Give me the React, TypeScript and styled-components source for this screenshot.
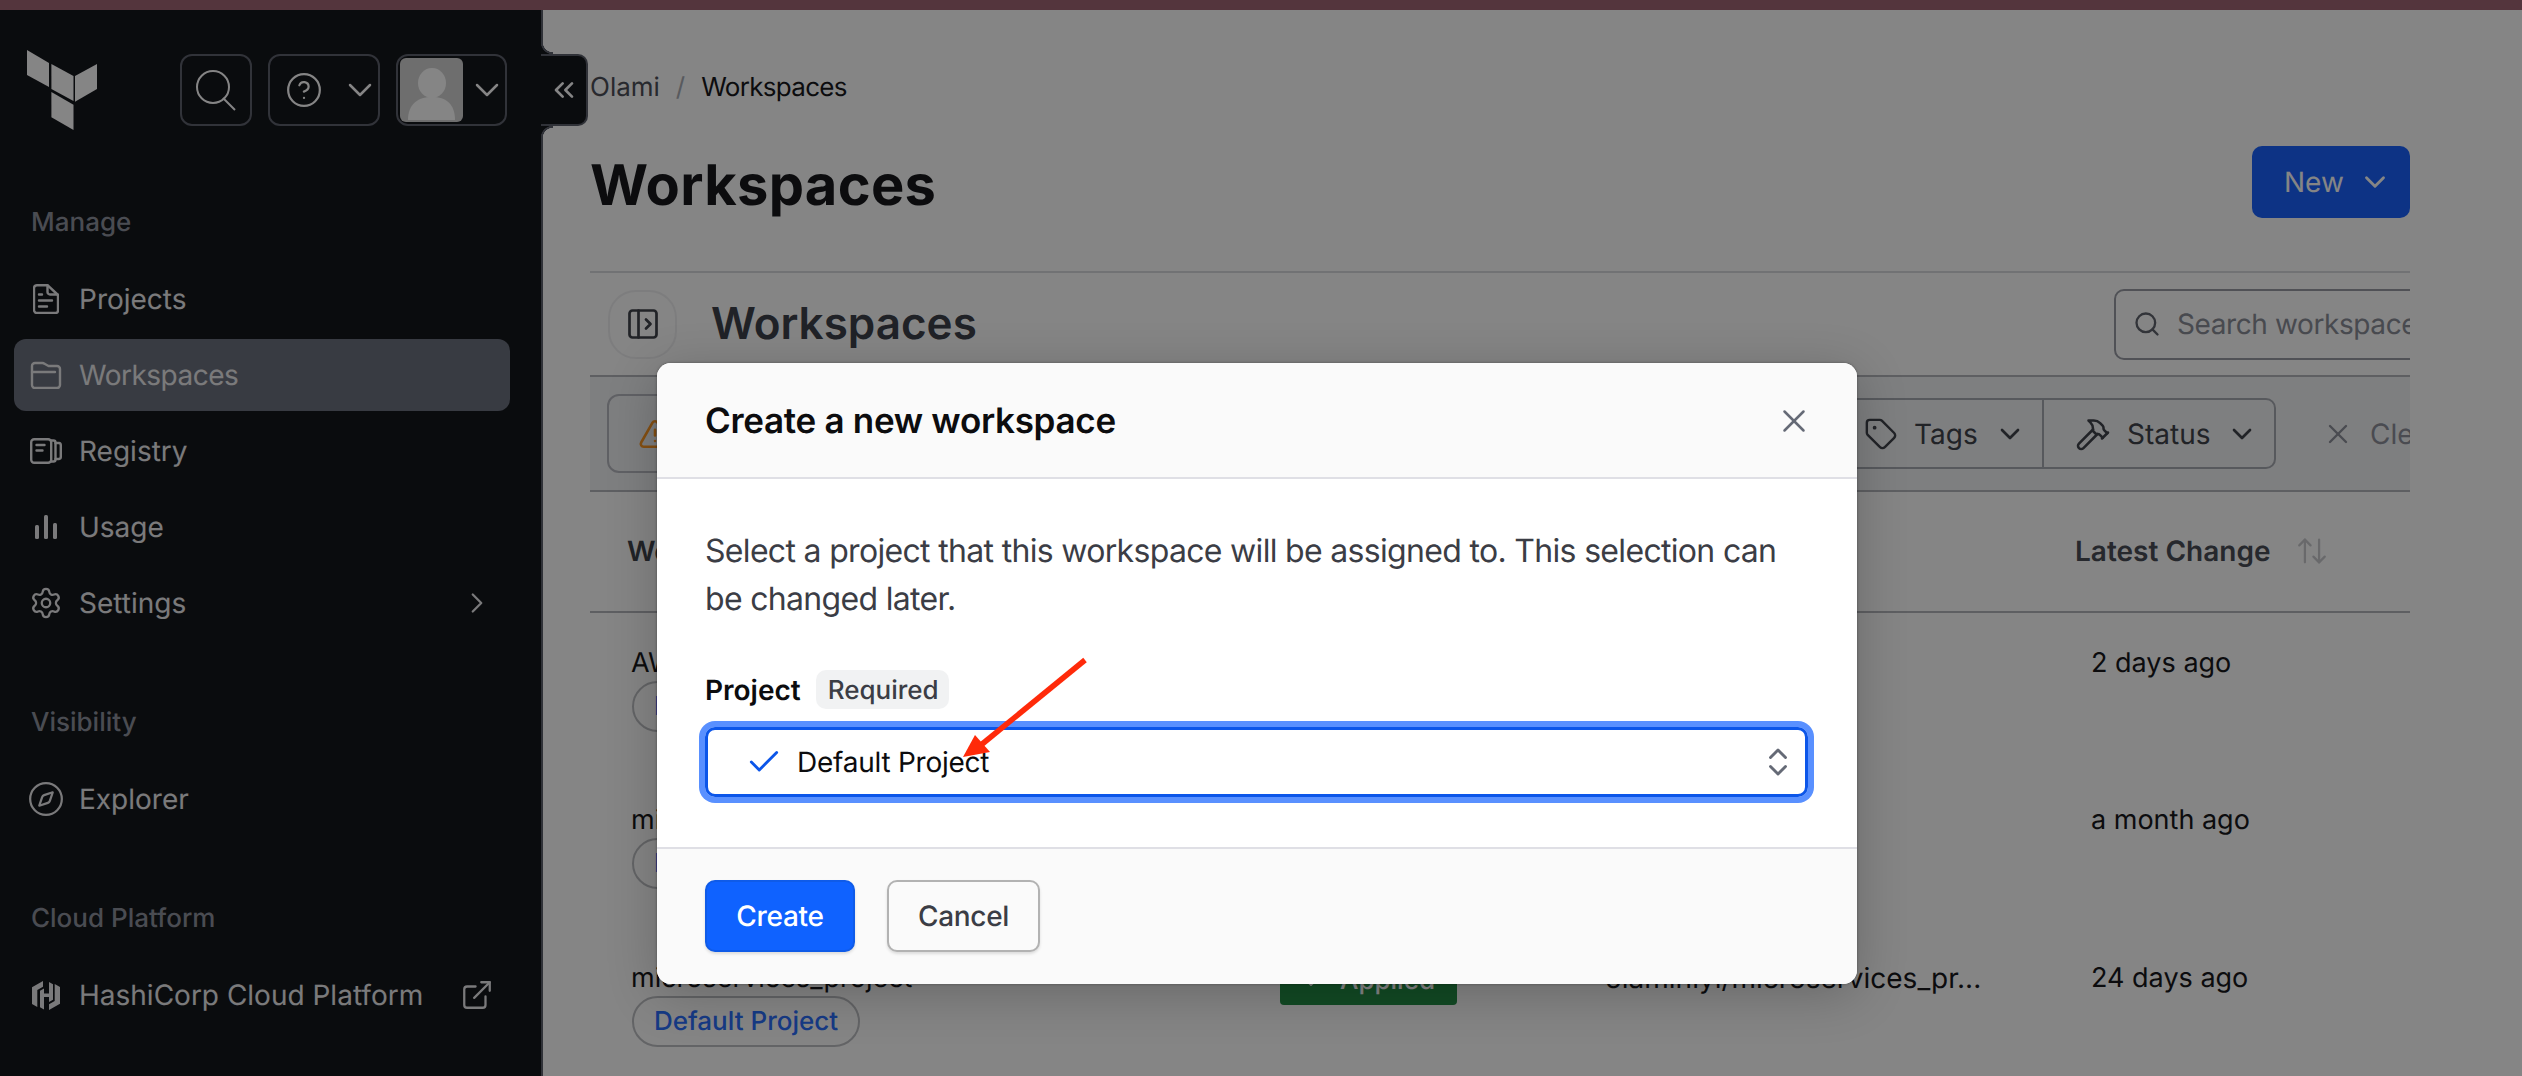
import React from "react";
import styled, { createGlobalStyle } from "styled-components";
import {
  ArrowUpDown,
  Check,
  ChevronDown,
  ChevronRight,
  ChevronsLeft,
  ChevronsUpDown,
  CircleHelp,
  Compass,
  ExternalLink,
  Hammer,
  PanelLeftOpen,
  Search,
  Settings,
  Tag,
  TriangleAlert,
  X,
} from "lucide-react";

const GlobalStyle = createGlobalStyle`
  html, body {
    margin: 0;
    padding: 0;
    background: #fff;
    overflow: hidden;
  }
  * {
    box-sizing: border-box;
  }
  svg {
    flex: none;
  }
  body {
    font-family: "Inter", "Liberation Sans", sans-serif;
    font-size: 28px;
    color: #17181c;
    text-rendering: geometricPrecision;
    -webkit-font-smoothing: antialiased;
  }
`;

const Page = styled.div`
  position: relative;
  width: 2522px;
  height: 1076px;
  overflow: hidden;
  display: flex;
  flex-direction: column;
`;

const TopStrip = styled.div`
  height: 10px;
  flex: none;
  background: #a26675;
`;

const Body = styled.div`
  flex: 1;
  min-height: 0;
  display: flex;
`;

/* ---- sidebar ---- */

const Sidebar = styled.aside`
  position: relative;
  flex: none;
  width: 543px;
  background: #15171c;
  border-right: 2px solid #5c606b;
  padding-top: 44px;
  display: flex;
  flex-direction: column;
`;

const SideHead = styled.div`
  display: flex;
  align-items: flex-start;
  padding-left: 27px;
  gap: 16px;
`;

const Logo = styled.svg`
  width: 70px;
  height: 80px;
  margin-top: -4px;
  margin-right: 67px;
  fill: #fff;
  flex: none;
`;

const HeadButton = styled.div<{ $w: number }>`
  width: ${(p) => p.$w}px;
  height: 72px;
  flex: none;
  border: 2px solid #5e626d;
  border-radius: 12px;
  color: #fff;
  display: flex;
  align-items: center;
  justify-content: ${(p) => (p.$w > 72 ? "space-between" : "center")};
  padding: ${(p) => (p.$w > 72 ? "0 0 0 2px" : "0")};
  & > svg:last-child {
    margin-right: ${(p) => (p.$w > 72 ? "-2px" : "0")};
  }
`;

const IconSlot = styled.span`
  width: 60px;
  display: flex;
  justify-content: center;
  margin-left: 2px;
`;

const Avatar = styled.svg`
  width: 63px;
  height: 64px;
  border-radius: 6px;
  background: #d4d4d4;
  flex: none;
`;

const SectionLabel = styled.div<{ $top: number }>`
  margin: ${(p) => p.$top}px 0 22px 31px;
  height: 36px;
  line-height: 36px;
  font-size: 26px;
  font-weight: 500;
  color: #8f939e;
`;

const NavList = styled.nav`
  display: flex;
  flex-direction: column;
  gap: 4px;
`;

const NavRow = styled.div<{ $active?: boolean }>`
  height: 72px;
  margin: 0 14px;
  width: 496px;
  padding: 0 16px 0 16px;
  border-radius: 12px;
  display: flex;
  align-items: center;
  gap: 17px;
  color: #eaeaec;
  font-size: 28px;
  letter-spacing: ${(p) => (p.$active ? "-0.5px" : "0")};
  background: ${(p) => (p.$active ? "#6c717f" : "transparent")};
`;

const NavIcon = styled.span`
  width: 32px;
  flex: none;
  display: flex;
  justify-content: center;
`;

const NavTrail = styled.span`
  margin-left: auto;
  display: flex;
`;

const CollapseTab = styled.div`
  position: absolute;
  top: 44px;
  left: 541px;
  width: 47px;
  height: 72px;
  background: #15171c;
  border: 2px solid #5c606b;
  border-left: none;
  border-radius: 0 10px 10px 0;
  color: #fff;
  display: flex;
  align-items: center;
  justify-content: center;
  z-index: 2;

  &::before,
  &::after {
    content: "";
    position: absolute;
    left: 0;
    width: 12px;
    height: 12px;
  }
  &::before {
    top: -14px;
    background: radial-gradient(circle at 100% 0, transparent 10px, #5c606b 10.5px, #5c606b 12px, #15171c 12.5px);
  }
  &::after {
    bottom: -14px;
    background: radial-gradient(circle at 100% 100%, transparent 10px, #5c606b 10.5px, #5c606b 12px, #15171c 12.5px);
  }
`;

/* ---- main ---- */

const Main = styled.main`
  flex: 1;
  min-width: 0;
  padding: 59px 112px 0 47px;
  overflow: hidden;
  background: #fff;
`;

const Content = styled.div`
  width: 1820px;
  overflow: hidden;
`;

const Crumbs = styled.div`
  display: flex;
  align-items: center;
  height: 36px;
  font-size: 26px;
  gap: 16px;
`;

const CrumbMuted = styled.span<{ $faint?: boolean }>`
  color: ${(p) => (p.$faint ? "#a9acb4" : "#4d5059")};
`;

const CrumbCurrent = styled.span`
  letter-spacing: -0.7px;
`;

const TitleRow = styled.div`
  margin-top: 41px;
  height: 72px;
  display: flex;
  justify-content: space-between;
  align-items: center;
`;

const PageTitle = styled.h1`
  margin: 6px 0 0 0;
  font-size: 56px;
  line-height: 68px;
  font-weight: 700;
  letter-spacing: 0.3px;
  color: #17181c;
`;

const NewButton = styled.div`
  width: 158px;
  height: 72px;
  border-radius: 10px;
  background: #1963ff;
  color: #fff;
  display: flex;
  align-items: center;
  padding-left: 32px;
  gap: 14px;
`;

const Panel = styled.section`
  margin-top: 53px;
  border-top: 2px solid #d9dade;
`;

const PanelHead = styled.div`
  height: 104px;
  padding-left: 18px;
  display: flex;
  align-items: center;
  border-bottom: 2px solid #b4b6bc;
`;

const RoundButton = styled.div`
  width: 69px;
  height: 69px;
  border-radius: 28px;
  border: 2px solid #f0f0f2;
  display: flex;
  align-items: center;
  justify-content: center;
  color: #40434c;
  flex: none;
`;

const PanelTitle = styled.h2`
  margin: 0 0 2px 34px;
  font-size: 44px;
  font-weight: 600;
  color: #3f424b;
`;

const SearchField = styled.div`
  margin-left: auto;
  margin-right: -100px;
  width: 396px;
  height: 71px;
  flex: none;
  border: 2px solid #999ca5;
  border-radius: 10px;
  padding-left: 17px;
  display: flex;
  align-items: center;
  gap: 16px;
  color: #61646e;
  white-space: nowrap;
  overflow: hidden;
`;

const SearchText = styled.span`
  color: #8b8e98;
  letter-spacing: -0.4px;
`;

const FilterRow = styled.div`
  height: 115px;
  padding-left: 17px;
  background: #f2f3f5;
  border-bottom: 2px solid #b4b6bc;
  display: flex;
  align-items: center;
  white-space: nowrap;
`;

const WarnButton = styled.div`
  width: 260px;
  height: 79px;
  flex: none;
  border: 2px solid #b8bac1;
  border-radius: 12px;
  padding-left: 29px;
  display: flex;
  align-items: center;
  color: #ff9a26;
`;

const FilterGroup = styled.div`
  margin-left: auto;
  height: 71px;
  flex: none;
  display: flex;
  border: 2px solid #a8abb3;
  border-radius: 10px;
`;

const FilterItem = styled.div<{ $w: number; $pad: number }>`
  width: ${(p) => p.$w}px;
  padding-left: ${(p) => p.$pad}px;
  display: flex;
  align-items: center;
  gap: 16px;
  color: #40434c;
  & + & {
    border-left: 2px solid #a8abb3;
  }
`;

const ClearFilters = styled.div`
  flex: none;
  width: 134px;
  padding-left: 46px;
  display: flex;
  align-items: center;
  gap: 16px;
  color: #8e919b;
  overflow: hidden;
`;

const TableHead = styled.div`
  height: 121px;
  padding: 0 0 2px 37px;
  display: grid;
  grid-template-columns: 653px 327px 468px 1fr;
  align-items: center;
  border-bottom: 2px solid #b4b6bc;
  font-weight: 600;
  color: #40434c;
`;

const SortLabel = styled.span`
  display: flex;
  align-items: center;
  gap: 25px;
  color: #4a4d56;
`;

const TableRow = styled.div<{ $h: number }>`
  height: ${(p) => p.$h}px;
  padding: 36px 0 0 41px;
  display: grid;
  grid-template-columns: 649px 325px 486px 1fr;
  align-items: start;
  white-space: nowrap;
`;

const Cell = styled.div<{ $size?: number }>`
  line-height: 28px;
  font-size: ${(p) => p.$size ?? 27}px;
  color: #17181c;
`;

const ProjectPill = styled.div`
  margin: 4px 0 0 1px;
  width: 228px;
  height: 51px;
  border: 2px solid #bfc0c4;
  border-radius: 26px;
  display: flex;
  align-items: center;
  justify-content: center;
  font-size: 26px;
  font-weight: 500;
  color: #2b6fff;
`;

const StatusBadge = styled.div`
  margin-top: -9px;
  width: 177px;
  height: 50px;
  border-radius: 4px;
  background: #238e45;
  color: #fff;
  display: flex;
  align-items: center;
  justify-content: center;
  gap: 14px;
  font-size: 26px;
  font-weight: 500;
`;

/* ---- dialog ---- */

const Overlay = styled.div`
  position: absolute;
  inset: 0;
  z-index: 10;
  background: rgba(0, 0, 0, 0.48);
  padding: 363px 0 0 657px;
`;

const Dialog = styled.div`
  position: relative;
  width: 1200px;
  height: 621px;
  border-radius: 14px;
  background: #fff;
  overflow: visible;
  display: flex;
  flex-direction: column;
  box-shadow: 0 0 3px rgba(0, 0, 0, 0.35), 0 10px 50px rgba(0, 0, 0, 0.22);
`;

const DialogHead = styled.header`
  height: 116px;
  flex: none;
  padding: 2px 44px 0 48px;
  border-bottom: 2px solid #dfdfe5;
  border-radius: 14px 14px 0 0;
  background: #fafafa;
  display: flex;
  align-items: center;
  justify-content: space-between;
  color: #656a76;
`;

const DialogTitle = styled.h3`
  margin: 0;
  font-size: 35px;
  font-weight: 600;
  letter-spacing: -0.3px;
  color: #0c0c0e;
`;

const DialogBody = styled.div`
  flex: 1;
  padding: 48px 49px 0 48px;
`;

const Lead = styled.p`
  margin: 0;
  font-size: 32px;
  line-height: 48px;
  letter-spacing: -0.68px;
  color: #3b3d45;
`;

const FieldLabelRow = styled.div`
  margin-top: 47px;
  height: 39px;
  display: flex;
  align-items: center;
  gap: 15px;
`;

const FieldLabel = styled.span`
  font-size: 28px;
  font-weight: 600;
  color: #0c0c0e;
`;

const RequiredTag = styled.span`
  width: 133px;
  height: 39px;
  padding: 1px 0 0 2px;
  border-radius: 10px;
  background: #f1f2f3;
  display: flex;
  align-items: center;
  justify-content: center;
  font-size: 26px;
  font-weight: 500;
  color: #3b3d45;
`;

const SelectBox = styled.div`
  margin-top: 18px;
  height: 70px;
  padding: 0 9px 0 37px;
  border: 3px solid #0c56e9;
  border-radius: 10px;
  box-shadow: 0 0 0 6px #5990ff;
  display: flex;
  align-items: center;
  gap: 14px;
  font-size: 28px;
  letter-spacing: -0.25px;
  color: #0c0c0e;
`;

const SelectCaret = styled.span`
  margin-left: auto;
  display: flex;
  color: #656a76;
`;

const DialogFoot = styled.footer`
  height: 137px;
  flex: none;
  padding: 31px 0 0 48px;
  border-top: 2px solid #dfdfe5;
  border-radius: 0 0 14px 14px;
  background: #fafafa;
  display: flex;
  align-items: flex-start;
  gap: 32px;
`;

const FootButton = styled.div<{ $primary?: boolean }>`
  width: ${(p) => (p.$primary ? 150 : 153)}px;
  height: 72px;
  border-radius: 10px;
  display: flex;
  align-items: center;
  justify-content: center;
  font-size: 28px;
  font-weight: 500;
  letter-spacing: -0.3px;
  color: ${(p) => (p.$primary ? "#fff" : "#3b3d45")};
  background: ${(p) => (p.$primary ? "#0f62ff" : "#fafafa")};
  border: 2px solid ${(p) => (p.$primary ? "#0f5be8" : "#b2b2b2")};
  box-shadow: 0 2px 3px rgba(0, 0, 0, 0.12);
`;

const CalloutArrow = styled.svg`
  position: absolute;
  left: 303px;
  top: 292px;
  width: 130px;
  height: 108px;
`;

const icon = { strokeWidth: 1.5 };

const rows = [
  { name: "AWS_project", repo: "olaminiyi/aws", when: "2 days ago", h: 157 },
  { name: "microservices", repo: "olaminiyi/micro", when: "a month ago", h: 158 },
  { name: "microservices_project", repo: "olaminiyi/microservices_pr...", when: "24 days ago", h: 150 },
];

const DocIcon = () => (
  <svg width="26" height="30" viewBox="0 0 26 30" fill="none" stroke="currentColor" strokeWidth="2.4" strokeLinecap="round" strokeLinejoin="round">
    <path d="M4 1.200h10.500L25 11v15.500a2.500 2.500 0 0 1-2.500 2.500H4a3 3 0 0 1-3-3V4a3 3 0 0 1 3-2.800z" />
    <path d="M14.500 1.500V8a2.500 2.500 0 0 0 2.500 2.500h7.500" />
    <path d="M6 10.500h3M6 16.500h13M6 22.500h8" />
  </svg>
);

const FolderIcon = () => (
  <svg width="32" height="28" viewBox="0 0 32 28" fill="none" stroke="currentColor" strokeWidth="2.4" strokeLinejoin="round" strokeLinecap="round">
    <path d="M2 5a3 3 0 0 1 3-3h7.500a3 3 0 0 1 2 .8L18.500 5H27a3 3 0 0 1 3 3v16a3 3 0 0 1-3 3H5a3 3 0 0 1-3-3z" />
    <path d="M2 11h23" />
  </svg>
);

const RegistryIcon = () => (
  <svg width="32" height="26" viewBox="0 0 32 26" fill="none" stroke="currentColor" strokeWidth="2.4" strokeLinecap="round">
    <rect x="1.2" y="1.2" width="20" height="23.6" rx="3" />
    <path d="M6.500 7h8M6.500 12.500h6" />
    <path d="M21 2.500h2.500a2 2 0 0 1 2 2v17a2 2 0 0 1-2 2H21" />
    <path d="M25.500 5H29a2 2 0 0 1 1.800 2v12a2 2 0 0 1-1.800 2h-3.500" />
  </svg>
);

const BarsIcon = () => (
  <svg width="22" height="24" viewBox="0 0 22 24" fill="currentColor">
    <rect x="0" y="10" width="4" height="14" rx="1.500" />
    <rect x="9" y="0" width="4" height="24" rx="1.500" />
    <rect x="18" y="8" width="4" height="16" rx="1.500" />
  </svg>
);

const HashiIcon = () => (
  <svg width="28" height="29" viewBox="0 0 28 29" fill="currentColor">
    <path d="M11 0 0 6.300V23l5.300 3V9l5.700-3.300z" />
    <path d="M17 1v11.500h-5V7.500L8 9.800v16.400l4 2.300V16h5v5l4-2.300V3.300z" />
    <path d="M17 29l11-6.300V6l-5.300-3v17L17 23.300z" />
  </svg>
);

export default function App() {
  return (
    <Page>
      <GlobalStyle />
      <TopStrip />
      <Body>
        <Sidebar>
          <SideHead>
            <Logo viewBox="0 0 70 80">
              <polygon points="0,0 22,13 22,37 0,25" />
              <polygon points="24.400,14 46.500,26 46.500,51 24.400,39" />
              <polygon points="48,26 70,14 70,39 48,51.700" />
              <polygon points="24.400,42 46.500,54.700 46.500,80 24.400,67.300" />
            </Logo>
            <HeadButton $w={72}>
              <svg width="44" height="44" viewBox="0 0 44 44" fill="none" stroke="currentColor" strokeWidth="2">
                <circle cx="19" cy="19" r="16" />
                <path d="M29 30l12 12" />
              </svg>
            </HeadButton>
            <HeadButton $w={112}>
              <IconSlot>
                <CircleHelp size={38} strokeWidth={1.4} />
              </IconSlot>
              <ChevronDown size={40} {...icon} />
            </HeadButton>
            <HeadButton $w={111}>
              <Avatar viewBox="0 0 63 64">
                <ellipse cx="32" cy="25" rx="14" ry="15" fill="#fff" />
                <path d="M8 62C8 46 18 39 32 39s23 7 23 23z" fill="#fff" />
              </Avatar>
              <ChevronDown size={40} {...icon} />
            </HeadButton>
          </SideHead>

          <SectionLabel $top={75}>Manage</SectionLabel>
          <NavList>
            <NavRow>
              <NavIcon>
                <DocIcon />
              </NavIcon>
              Projects
            </NavRow>
            <NavRow $active>
              <NavIcon>
                <FolderIcon />
              </NavIcon>
              Workspaces
            </NavRow>
            <NavRow>
              <NavIcon>
                <RegistryIcon />
              </NavIcon>
              Registry
            </NavRow>
            <NavRow>
              <NavIcon>
                <BarsIcon />
              </NavIcon>
              Usage
            </NavRow>
            <NavRow>
              <NavIcon>
                <Settings size={34} strokeWidth={1.6} />
              </NavIcon>
              Settings
              <NavTrail>
                <ChevronRight size={34} strokeWidth={1.6} />
              </NavTrail>
            </NavRow>
          </NavList>

          <SectionLabel $top={66}>Visibility</SectionLabel>
          <NavList>
            <NavRow>
              <NavIcon>
                <Compass size={38} strokeWidth={1.4} />
              </NavIcon>
              Explorer
            </NavRow>
          </NavList>

          <SectionLabel $top={66}>Cloud Platform</SectionLabel>
          <NavList>
            <NavRow>
              <NavIcon>
                <HashiIcon />
              </NavIcon>
              HashiCorp Cloud Platform
              <NavTrail>
                <ExternalLink size={34} strokeWidth={1.6} />
              </NavTrail>
            </NavRow>
          </NavList>

          <CollapseTab>
            <ChevronsLeft size={32} strokeWidth={2} />
          </CollapseTab>
        </Sidebar>

        <Main>
          <Content>
            <Crumbs>
              <CrumbMuted>Olami</CrumbMuted>
              <CrumbMuted $faint>/</CrumbMuted>
              <CrumbCurrent>Workspaces</CrumbCurrent>
            </Crumbs>
            <TitleRow>
              <PageTitle>Workspaces</PageTitle>
              <NewButton>
                New
                <ChevronDown size={34} strokeWidth={2} />
              </NewButton>
            </TitleRow>

            <Panel>
              <PanelHead>
                <RoundButton>
                  <PanelLeftOpen size={36} strokeWidth={1.8} />
                </RoundButton>
                <PanelTitle>Workspaces</PanelTitle>
                <SearchField>
                  <Search size={28} strokeWidth={2} />
                  <SearchText>Search workspaces</SearchText>
                </SearchField>
              </PanelHead>

              <FilterRow>
                <WarnButton>
                  <TriangleAlert size={34} strokeWidth={1.8} />
                </WarnButton>
                <FilterGroup>
                  <FilterItem $w={206} $pad={28}>
                    <Tag size={34} strokeWidth={1.7} />
                    Tags
                    <ChevronDown size={32} strokeWidth={2} />
                  </FilterItem>
                  <FilterItem $w={232} $pad={31}>
                    <Hammer size={36} strokeWidth={1.7} />
                    Status
                    <ChevronDown size={32} strokeWidth={2} />
                  </FilterItem>
                </FilterGroup>
                <ClearFilters>
                  <X size={32} strokeWidth={1.8} />
                  Clear all filters
                </ClearFilters>
              </FilterRow>

              <TableHead>
                <span>Workspace Name</span>
                <span>Run Status</span>
                <span>Repo</span>
                <SortLabel>
                  Latest Change
                  <ArrowUpDown size={34} strokeWidth={1.6} color="#c9cace" />
                </SortLabel>
              </TableHead>

              {rows.map((row) => (
                <TableRow key={row.name} $h={row.h}>
                  <div>
                    <Cell>{row.name}</Cell>
                    <ProjectPill>Default Project</ProjectPill>
                  </div>
                  <StatusBadge>
                    <Check size={24} strokeWidth={2} />
                    Applied
                  </StatusBadge>
                  <Cell $size={28}>{row.repo}</Cell>
                  <Cell>{row.when}</Cell>
                </TableRow>
              ))}
            </Panel>
          </Content>
        </Main>
      </Body>

      <Overlay>
        <Dialog>
          <DialogHead>
            <DialogTitle>Create a new workspace</DialogTitle>
            <X size={38} strokeWidth={1.6} />
          </DialogHead>
          <DialogBody>
            <Lead>
              Select a project that this workspace will be assigned to. This selection can be
              changed later.
            </Lead>
            <FieldLabelRow>
              <FieldLabel>Project</FieldLabel>
              <RequiredTag>Required</RequiredTag>
            </FieldLabelRow>
            <SelectBox>
              <Check size={38} strokeWidth={1.8} color="#0c56e9" />
              Default Project
              <SelectCaret>
                <ChevronsUpDown size={36} strokeWidth={1.9} />
              </SelectCaret>
            </SelectBox>
          </DialogBody>
          <DialogFoot>
            <FootButton $primary>Create</FootButton>
            <FootButton>Cancel</FootButton>
          </DialogFoot>
          <CalloutArrow viewBox="0 0 130 108">
            <path d="M125 5 21 90" stroke="#ff2a0a" strokeWidth="5.500" fill="none" />
            <polygon points="3,102 15,80 30,97" fill="#ff2a0a" />
          </CalloutArrow>
        </Dialog>
      </Overlay>
    </Page>
  );
}
